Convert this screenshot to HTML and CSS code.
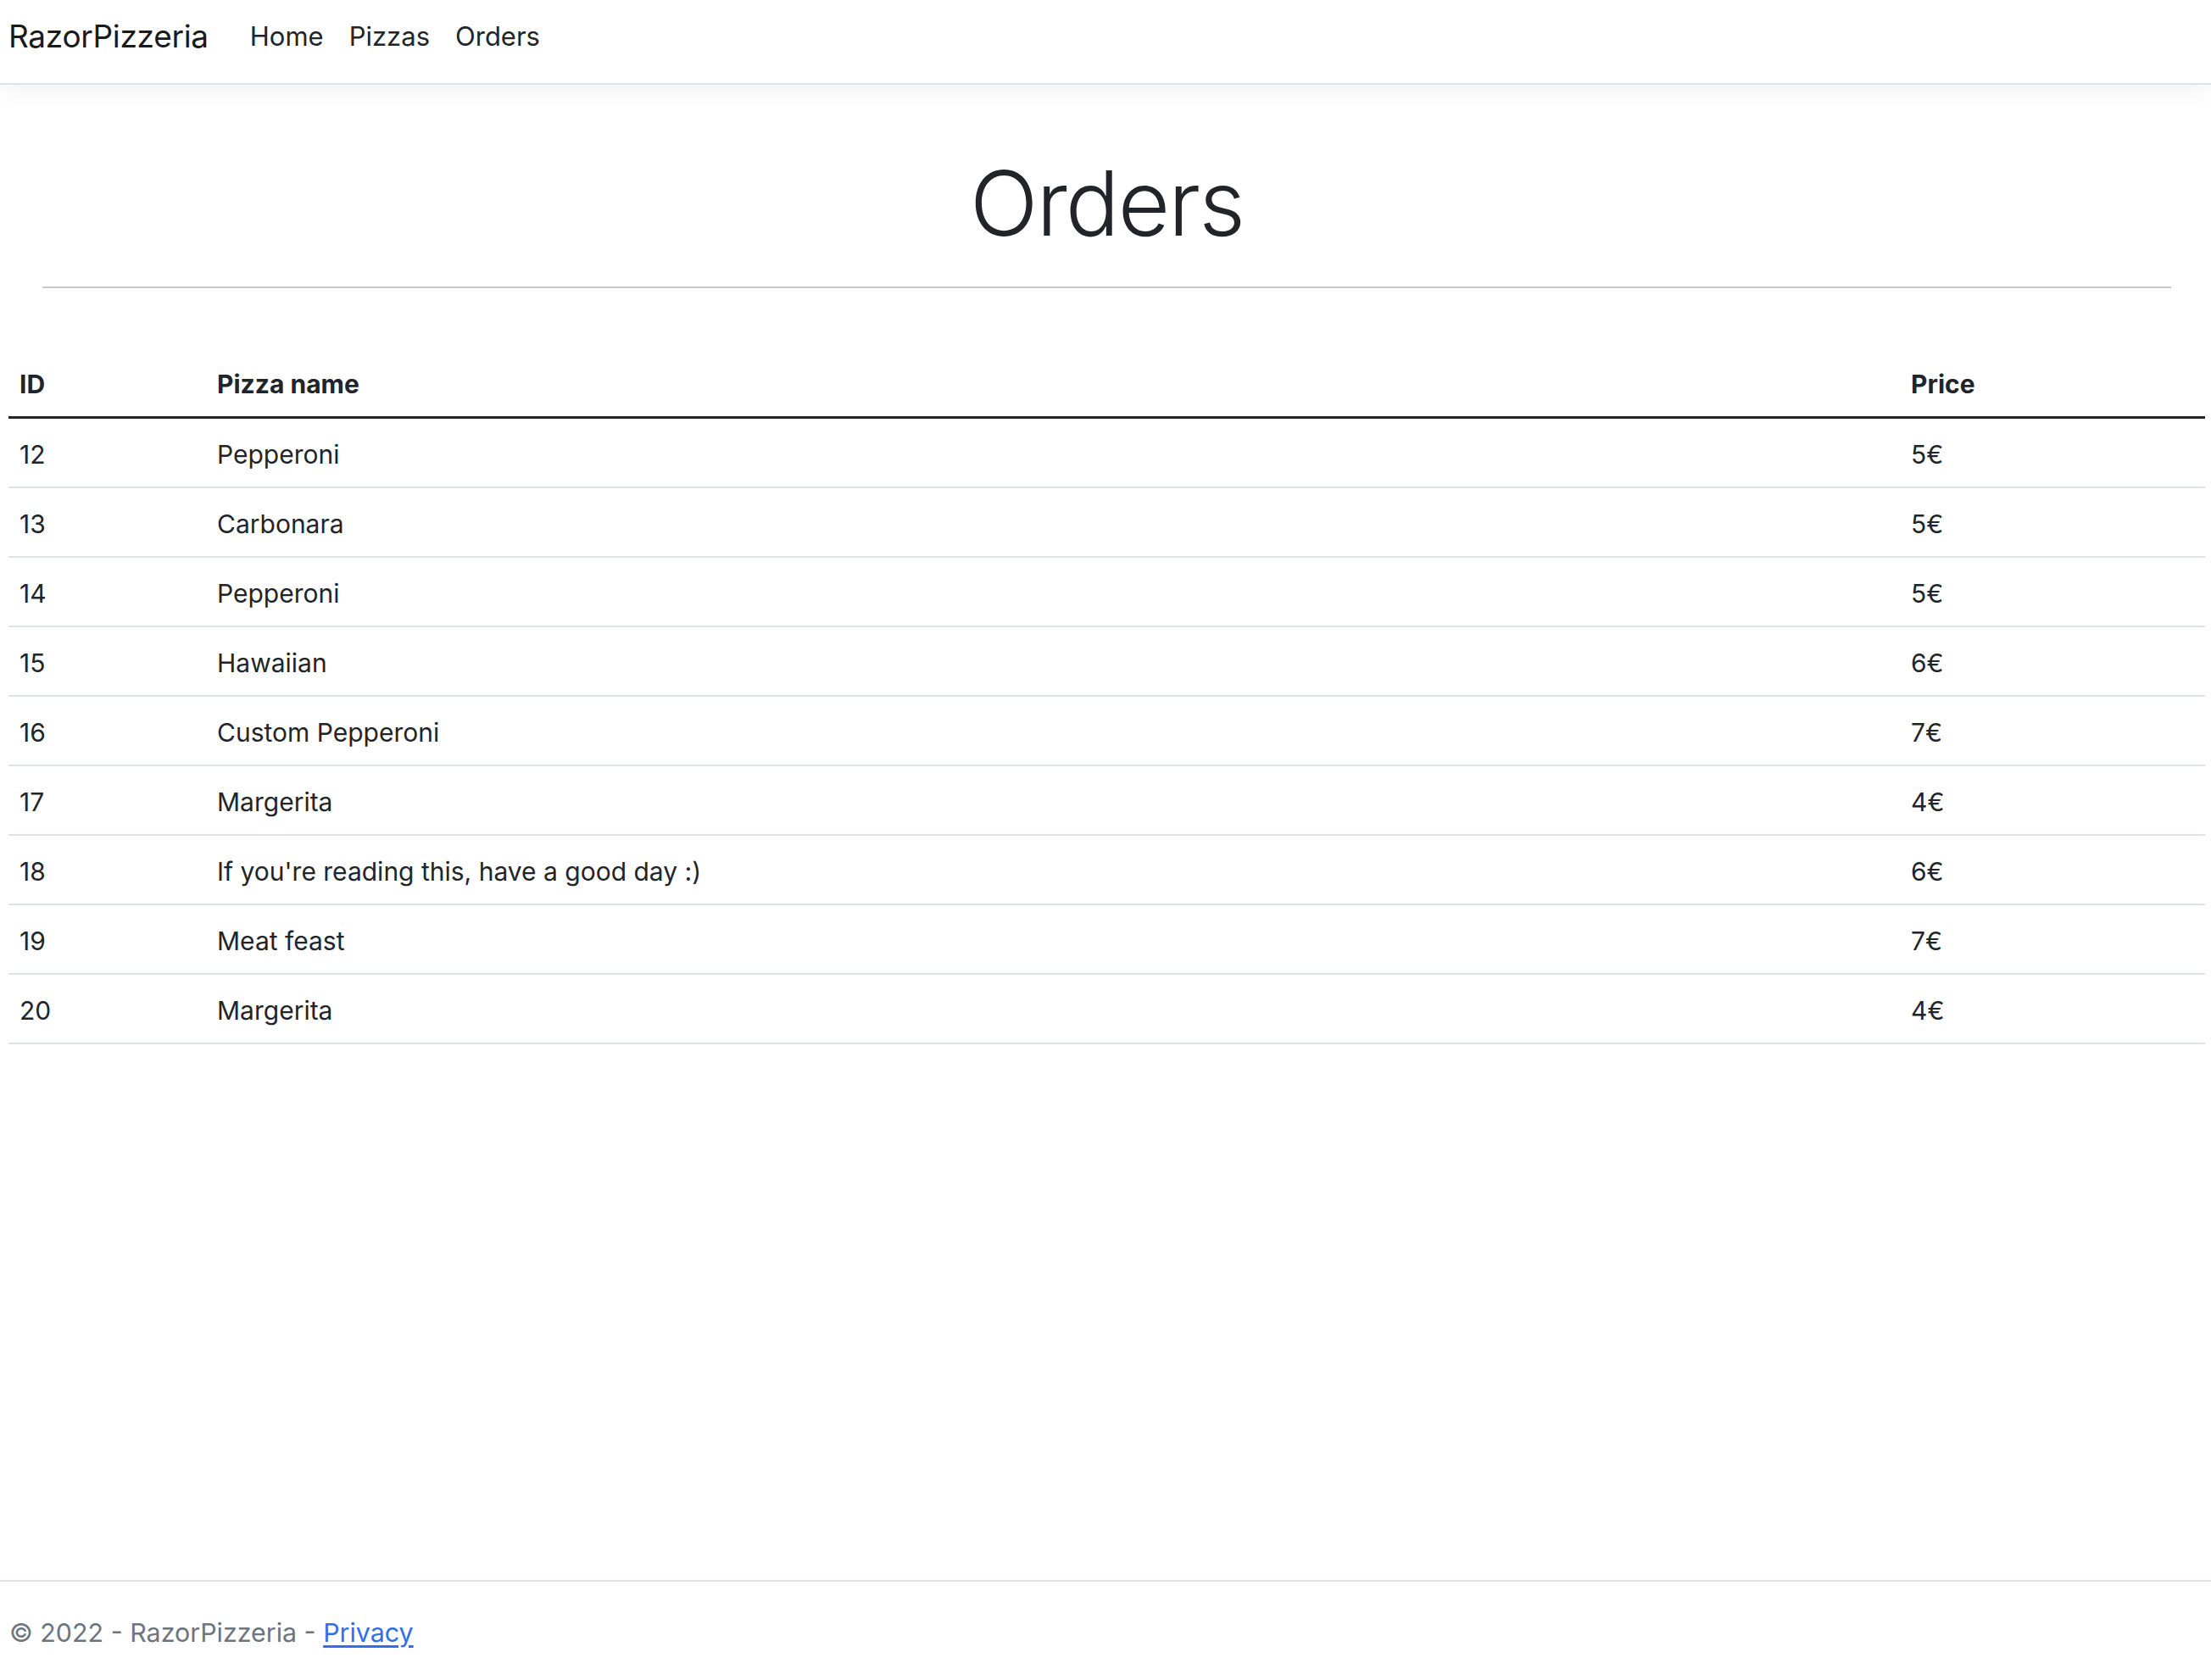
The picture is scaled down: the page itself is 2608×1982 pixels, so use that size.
FILE: index.html
```html
<!DOCTYPE html>
<html lang="en">
<head>
<meta charset="utf-8">
<title>Orders - RazorPizzeria</title>
<link rel="stylesheet" href="styles.css">
</head>
<body>
<header class="navbar">
  <a class="brand" href="#">RazorPizzeria</a>
  <nav class="nav">
    <a class="nav-link" href="#">Home</a>
    <a class="nav-link" href="#">Pizzas</a>
    <a class="nav-link" href="#">Orders</a>
  </nav>
</header>
<main class="main">
  <h1 class="title">Orders</h1>
  <hr class="rule">
  <table class="orders">
    <colgroup>
      <col class="c-id">
      <col class="c-name">
      <col class="c-price">
    </colgroup>
    <thead>
      <tr><th>ID</th><th>Pizza name</th><th>Price</th></tr>
    </thead>
    <tbody>
      <tr><td>12</td><td>Pepperoni</td><td>5€</td></tr>
      <tr><td>13</td><td>Carbonara</td><td>5€</td></tr>
      <tr><td>14</td><td>Pepperoni</td><td>5€</td></tr>
      <tr><td>15</td><td>Hawaiian</td><td>6€</td></tr>
      <tr><td>16</td><td>Custom Pepperoni</td><td>7€</td></tr>
      <tr><td>17</td><td>Margerita</td><td>4€</td></tr>
      <tr><td>18</td><td>If you're reading this, have a good day :)</td><td>6€</td></tr>
      <tr><td>19</td><td>Meat feast</td><td>7€</td></tr>
      <tr><td>20</td><td>Margerita</td><td>4€</td></tr>
    </tbody>
  </table>
</main>
<footer class="footer">
  <span>© 2022 - RazorPizzeria - <a class="footer-link" href="#">Privacy</a></span>
</footer>
</body>
</html>
```

FILE: styles.css
```css
* { box-sizing: border-box; }
html, body { height: 100%; }
body {
  margin: 0;
  font-family: Inter, "Noto Sans", sans-serif;
  color: #212529;
  background: #fff;
  display: flex;
  flex-direction: column;
  min-height: 100vh;
}
a { text-decoration: none; }

.navbar {
  height: 100px;
  border-bottom: 2px solid #dfe2e6;
  box-shadow: 0 8px 24px rgba(0, 0, 0, 0.05);
  display: flex;
  align-items: center;
  padding: 0 10px 14px;
  position: relative;
  z-index: 1;
  background: #fff;
}
.brand {
  font-size: 37px;
  color: #1a1a1a;
  margin-right: 49px;
  letter-spacing: -0.3px;
}
.nav { display: flex; gap: 30px; }
.nav-link {
  font-size: 31px;
  color: #212529;
}

.main { flex: 1; padding: 74px 7px 0 10px; }
.title {
  margin: 0;
  text-align: center;
  font-size: 106px;
  font-weight: 300;
  line-height: 132px;
  letter-spacing: -2px;
}
.rule {
  margin: 32px 40px 0 40px;
  border: 0;
  border-top: 2px solid #c8c8c8;
  height: 0;
}
.orders {
  margin-top: 71px;
  width: 100%;
  border-collapse: collapse;
  font-size: 30px;
  line-height: 40px;
}
.c-id { width: 233px; }
.c-name { width: 1998px; }
.orders th, .orders td {
  text-align: left;
  padding: 22px 13px 18px 13px;
}
.orders th { font-weight: 700; border-bottom: 3px solid #212529; }
.orders td { border-bottom: 2px solid #dee2e6; }

.footer {
  height: 118px;
  border-top: 2px solid #dee2e6;
  display: flex;
  align-items: center;
  padding: 4px 11px 0;
  font-size: 30.4px;
  color: #6c757d;
}
.footer-link { color: #2f6fe8; text-decoration: underline; text-underline-offset: 4px; }
```
